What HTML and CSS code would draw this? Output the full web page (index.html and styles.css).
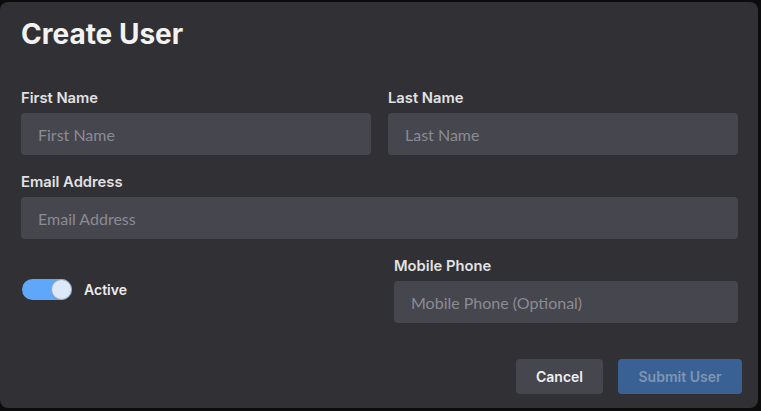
FILE: index.html
```html
<!DOCTYPE html>
<html lang="en">
<head>
    <meta charset="UTF-8">
    <meta name="viewport" content="width=device-width, initial-scale=1.0">
    <title>Create User</title>
    <link rel="stylesheet" href="styles.css">
</head>
<body>
    <div class="dialog">
        <h1 class="title">Create User</h1>

        <div class="row two-col">
            <div class="field">
                <label for="firstName">First Name</label>
                <input id="firstName" type="text" placeholder="First Name">
            </div>
            <div class="field">
                <label for="lastName">Last Name</label>
                <input id="lastName" type="text" placeholder="Last Name">
            </div>
        </div>

        <div class="row">
            <div class="field">
                <label for="email">Email Address</label>
                <input id="email" type="text" placeholder="Email Address">
            </div>
        </div>

        <div class="row split">
            <div class="switch-wrap">
                <span class="switch"><span class="knob"></span></span>
                <span class="switch-label">Active</span>
            </div>
            <div class="field phone">
                <label for="phone">Mobile Phone</label>
                <input id="phone" type="text" placeholder="Mobile Phone (Optional)">
            </div>
        </div>

        <div class="actions">
            <button class="btn btn-cancel">Cancel</button>
            <button class="btn btn-submit">Submit User</button>
        </div>
    </div>
</body>
</html>
```

FILE: styles.css
```css
body {
    margin: 0;
    background: #0c0c0d;
    font-family: Inter, 'Noto Sans', sans-serif;
}

.dialog {
    box-sizing: border-box;
    width: 758px;
    height: 406px;
    margin-top: 2px;
    padding: 15px 20px 14px 21px;
    background: #303035;
    border-radius: 8px;
    display: flex;
    flex-direction: column;
}

.title {
    margin: 0 0 37px;
    font-size: 28px;
    line-height: 34px;
    font-weight: 700;
    color: #f2f2f2;
}

.row {
    margin-bottom: 17px;
}

.two-col {
    display: grid;
    grid-template-columns: 1fr 1fr;
    gap: 17px;
}

.split {
    display: flex;
    justify-content: space-between;
    align-items: center;
    margin-bottom: 36px;
}

.field {
    display: flex;
    flex-direction: column;
    gap: 5px;
}

.field label {
    font-size: 14.75px;
    line-height: 20px;
    font-weight: 600;
    color: #e2e2e4;
}

.field input {
    box-sizing: border-box;
    height: 42px;
    padding: 0 17px;
    border: none;
    border-radius: 4px;
    background: #46464f;
    color: #e2e2e4;
    font-family: Lato, sans-serif;
    font-size: 16px;
    outline: none;
}

.field input::placeholder {
    color: #8b8b92;
}

.phone {
    width: 344px;
}

.switch-wrap {
    display: flex;
    align-items: center;
    gap: 12px;
    padding-left: 1px;
}

.switch {
    position: relative;
    width: 50px;
    height: 21px;
    border-radius: 11px;
    background: #5ea7fb;
}

.knob {
    position: absolute;
    top: 0;
    right: 0;
    box-sizing: border-box;
    width: 21px;
    height: 21px;
    border-radius: 50%;
    background: #dce9fb;
    border: 1px solid #9ea3ab;
}

.switch-label {
    font-size: 14px;
    font-weight: 600;
    color: #ececee;
}

.actions {
    display: flex;
    justify-content: flex-end;
    gap: 15px;
    margin-right: -4px;
}

.btn {
    height: 35px;
    padding: 0 20px;
    border: none;
    border-radius: 4px;
    font-family: Inter, sans-serif;
    font-size: 14px;
    font-weight: 600;
    cursor: pointer;
}

.btn-cancel {
    width: 87px;
    background: #46464f;
    color: #f0f0f0;
}

.btn-submit {
    width: 124px;
    background: #3a6194;
    color: #7f95b3;
}
```
